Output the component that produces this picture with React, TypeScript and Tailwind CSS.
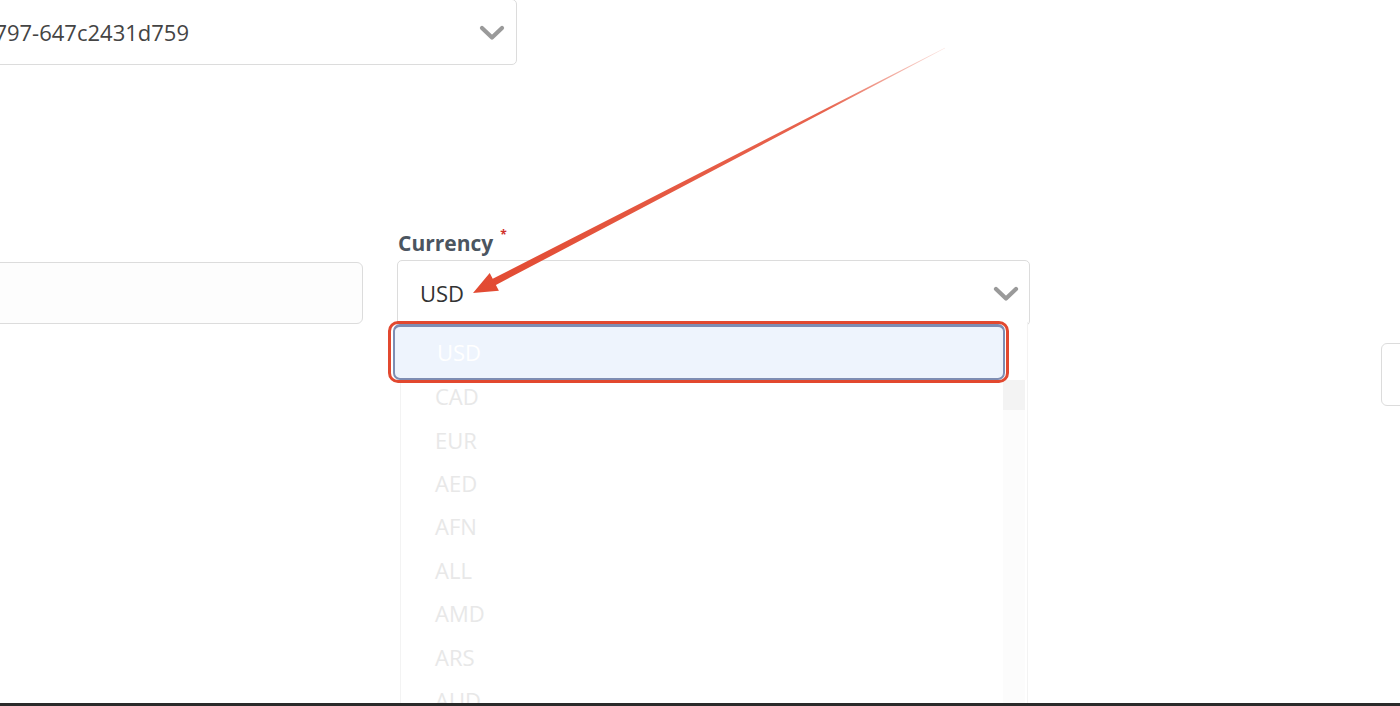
import React from 'react';

const currencies = ['CAD', 'EUR', 'AED', 'AFN', 'ALL', 'AMD', 'ARS', 'AUD'];

function Chevron({ className }: { className?: string }) {
  return (
    <svg viewBox="0 0 26 16" className={className} fill="none">
      <path d="M3 3 L13 12.5 L23 3" stroke="#9a9a9a" strokeWidth="4.2" strokeLinecap="round" strokeLinejoin="round" />
    </svg>
  );
}

function Arrow() {
  return (
    <svg className="absolute inset-0 pointer-events-none" width="1400" height="706" viewBox="0 0 1400 706">
      <defs>
        <linearGradient id="fade" x1="945" y1="48" x2="473" y2="293" gradientUnits="userSpaceOnUse">
          <stop offset="0" stopColor="#e5533b" stopOpacity="0.15" />
          <stop offset="0.25" stopColor="#e5533b" stopOpacity="0.9" />
          <stop offset="1" stopColor="#e24a32" stopOpacity="1" />
        </linearGradient>
      </defs>
      <polygon
        points="944.9,47.7 945.1,48.3 495.9,285.0 498.9,290.8 473,293 489.7,273.0 492.7,278.8"
        fill="url(#fade)"
      />
    </svg>
  );
}

export default function App() {
  return (
    <div className="relative w-[1400px] h-[706px] overflow-hidden bg-white font-['Open_Sans',sans-serif]">
      <div className="flex flex-col">
        {/* top select, cut by the left edge */}
        <div className="-ml-[300px] w-[817px] h-[66px] -mt-px flex items-center border border-[#dcdcdc] rounded-[5px] bg-white">
          <span className="w-[488px] shrink-0 text-right whitespace-nowrap text-[22px] text-[#444]">
            3f2a1b9e-5c4d-4e8a-9797-647c2431d759
          </span>
          <div className="flex-1" />
          <Chevron className="w-[26px] h-[16px] mr-[11px] mt-[2px]" />
        </div>

        <div className="mt-[163px] flex items-start">
          {/* left input, cut */}
          <div className="-ml-[100px] w-[463px] h-[62px] mt-[34px] shrink-0 border border-[#dcdcdc] rounded-[6px] bg-[#fdfdfd]" />

          {/* currency field */}
          <div className="relative ml-[34px] w-[633px] shrink-0">
            <div className="flex items-start h-[28px] pl-[1px]">
              <span className="text-[21px] leading-[30px] font-bold text-[#4b5560]">Currency</span>
              <span className="ml-[7px] text-[12px] leading-[12px] mt-[1px] font-bold text-[#d0302a]">*</span>
            </div>
            <div className="mt-[4px] h-[66px] flex items-center justify-between border border-[#dcdcdc] rounded-[5px] bg-white pl-[22px] pr-[10px]">
              <span className="text-[22px] text-[#333]">USD</span>
              <Chevron className="w-[26px] h-[16px] mt-[2px]" />
            </div>

            {/* open list */}
            <div className="absolute left-[3px] top-[94px] w-[628px] h-[400px] bg-white border-x border-[#f3f3f3]">
              <div className="-ml-[8px] mt-[2px] w-[612px] h-[56px] flex items-center pl-[42px] rounded-[7px] border-2 border-t-[3px] border-[#7e8db3] bg-[#eef4fd]">
                <span className="text-[22px] text-white">USD</span>
              </div>
              <div className="-mt-[5px] pr-[26px]">
                {currencies.map((c) => (
                  <div key={c} className="h-[43.4px] flex items-center pl-[34px] text-[22px] text-[#e8e8e8]">
                    {c}
                  </div>
                ))}
              </div>
              <div className="absolute right-[2px] top-[58px] bottom-0 w-[22px] bg-[#fcfcfc]">
                <div className="w-full h-[30px] bg-[#f3f3f3]" />
              </div>
            </div>

            {/* annotation box */}
            <div className="absolute -left-[9px] top-[93px] w-[621px] h-[62px] border-[3.5px] border-[#e2482f] rounded-[10px]" />
          </div>

          {/* right input, cut */}
          <div className="ml-[351px] mt-[115px] w-[100px] h-[63px] shrink-0 border border-[#dcdcdc] rounded-[6px] bg-white" />
        </div>
      </div>

      <Arrow />
      <div className="absolute left-0 right-0 bottom-0 h-[3px] bg-[#2a2a2a]" />
    </div>
  );
}
